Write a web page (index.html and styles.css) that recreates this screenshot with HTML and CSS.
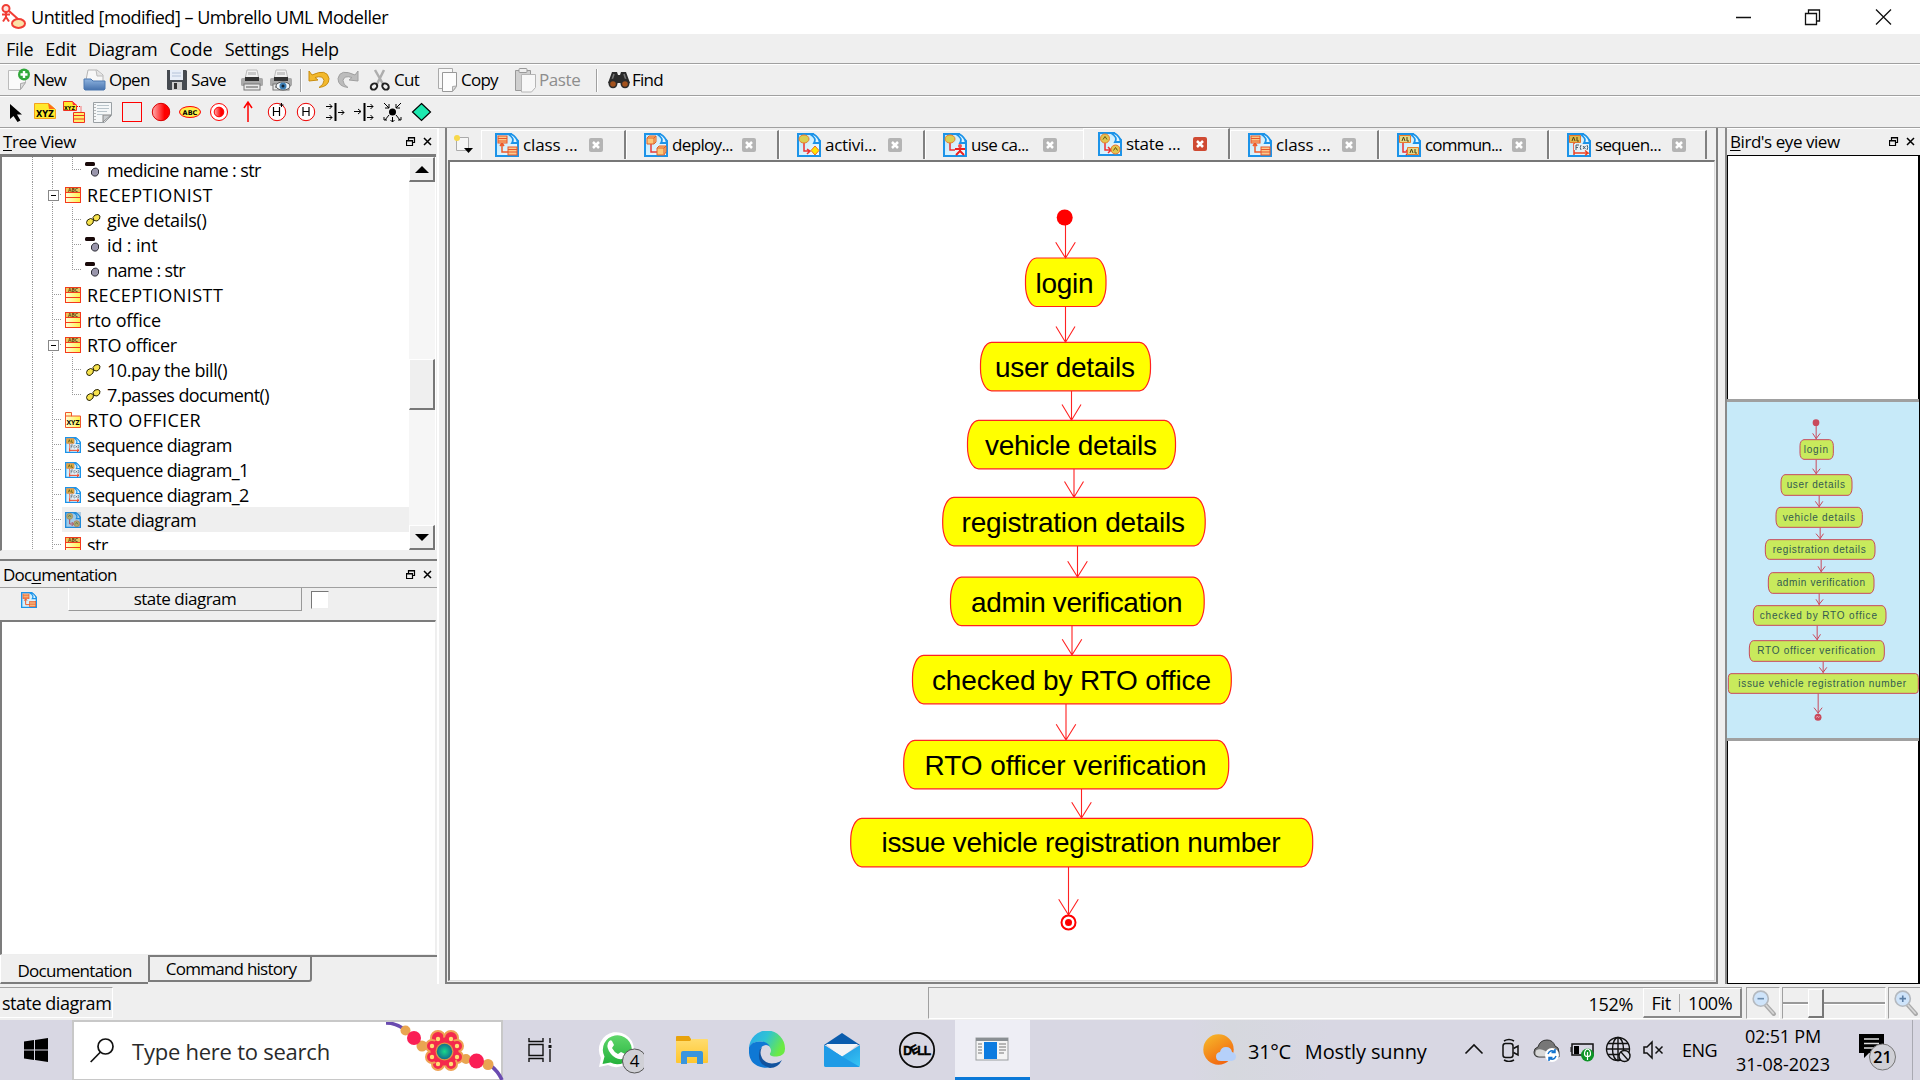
FILE: index.html
```html
<!DOCTYPE html>
<html lang="en">
<head>
<meta charset="utf-8">
<title>Untitled [modified] – Umbrello UML Modeller</title>
<link rel="stylesheet" href="styles.css">
</head>
<body>
<svg class="defs" width="0" height="0">
  <defs>
    <linearGradient id="yel" x1="0" x2="1"><stop offset="0" stop-color="#ffffd8"/><stop offset="1" stop-color="#fff14a"/></linearGradient>
    <linearGradient id="redg" x1="0" x2="1"><stop offset="0" stop-color="#ffb0b0"/><stop offset=".7" stop-color="#f00"/></linearGradient>
    <linearGradient id="page" x1="0" x2="1" y2="1"><stop offset="0" stop-color="#b9e6fb"/><stop offset="1" stop-color="#f4fcff"/></linearGradient>
    <linearGradient id="fold" y2="1" x2="0"><stop offset="0" stop-color="#8fb4e0"/><stop offset="1" stop-color="#4672ad"/></linearGradient>
    <linearGradient id="gold" y2="1" x2="0"><stop offset="0" stop-color="#ffdc6e"/><stop offset="1" stop-color="#ffc62e"/></linearGradient>
    <linearGradient id="wa" y2="1" x2="0"><stop offset="0" stop-color="#5fd66b"/><stop offset="1" stop-color="#25b23c"/></linearGradient>
    <linearGradient id="edge1" x2="1" y2=".4"><stop offset="0" stop-color="#2aa6ee"/><stop offset=".5" stop-color="#2fc3d4"/><stop offset="1" stop-color="#6bea44"/></linearGradient>
    <linearGradient id="sun" x2=".6" y2="1"><stop offset="0" stop-color="#f6bd2c"/><stop offset="1" stop-color="#f2660f"/></linearGradient>
    <linearGradient id="mail" x2="1" y2="1"><stop offset="0" stop-color="#1c87dc"/><stop offset="1" stop-color="#35c6f4"/></linearGradient>
    <radialGradient id="gem"><stop offset="0" stop-color="#19d98b"/><stop offset="1" stop-color="#12708c"/></radialGradient>
    <symbol id="i-class" viewBox="0 0 16 16">
      <rect x=".5" y=".5" width="15" height="15" fill="url(#yel)" stroke="#f43a1c"/>
      <rect x="1" y="1" width="14" height="4" fill="#e8c860"/>
      <path d="M0 5.500H16M0 10.500H16" stroke="#f43a1c"/>
      <text x="8" y="4.800" font-size="5" font-weight="700" text-anchor="middle" fill="#5c3c10">ABC</text>
    </symbol>
    <symbol id="i-pkg" viewBox="0 0 16 16">
      <path d="M.5 .5h6v3.500h9v11.500H.5z" fill="url(#yel)" stroke="#f0582c"/>
      <path d="M1 4h6" stroke="#f0582c"/>
      <text x="8" y="13" font-size="7" font-weight="700" text-anchor="middle">XYZ</text>
    </symbol>
    <symbol id="i-op" viewBox="0 0 16 16">
      <path d="M1.500 10.500l1-2.500 3-1.500 3 1-.5 3.500-3 2.500-2.500-.5zM8 5.500l2-2.500 3-.5 2 1.500-.5 3-2.500 2-3-.5z" fill="#f7e34e" stroke="#2a2400"/>
    </symbol>
    <symbol id="i-attr" viewBox="0 0 16 16">
      <rect x="0" y="0" width="10" height="4" rx="1.500" fill="#180808"/>
      <path d="M6.500 9l2-2.500 3-.5 2 2v3.500l-2 2.500h-3l-2-2z" fill="#9a96ac" stroke="#2c2c34"/>
    </symbol>
    <symbol id="i-doc" viewBox="0 0 24 24">
      <path d="M1 1h15l7 7v15H1z" fill="url(#page)" stroke="#1c93e8" stroke-width="2"/>
      <path d="M13 1h3q6 3 7 9h-6q3-5-4-9z" fill="#e2f5fe" stroke="#1c93e8" stroke-width="1.800"/>
    </symbol>
    <symbol id="i-dclass" viewBox="0 0 24 24"><use href="#i-doc"/><path d="M7 10v9h7M5 13l2-3 2 3" fill="none" stroke="#f05a28" stroke-width="1.500"/><rect x="3" y="3" width="9" height="7" fill="#fbc98a" stroke="#e8562a"/><path d="M3 5.500h9M3 8h9" stroke="#e8562a"/><rect x="13" y="14" width="9" height="8" fill="#fbc98a" stroke="#e8562a"/><path d="M13 16.500h9M13 19h9" stroke="#e8562a"/></symbol>
    <symbol id="i-ddeploy" viewBox="0 0 24 24"><use href="#i-doc"/><path d="M7 10v9h7" fill="none" stroke="#e83a3a" stroke-width="1.500"/><path d="M3 5l2-2h7v6l-2 2H3zM3 5h7v6M10 5l2-2M13 15l2-2h7v6l-2 3h-7zM13 15h7v6M20 15l2-2" fill="#fbc878" stroke="#e0602a"/></symbol>
    <symbol id="i-dact" viewBox="0 0 24 24"><use href="#i-doc"/><path d="M7 9v9h6m-3-2l3 2-3 3" fill="none" stroke="#ee3030" stroke-width="1.500"/><ellipse cx="7" cy="6" rx="5" ry="4" fill="#d9cf52" stroke="#ea7d2a"/><path d="M18 13l4 4.500-4 4.500-4-4.500z" fill="#ffe500" stroke="#ee6a20"/></symbol>
    <symbol id="i-duse" viewBox="0 0 24 24"><use href="#i-doc"/><path d="M7 9v8h5" fill="none" stroke="#ee3030" stroke-width="1.500"/><ellipse cx="7" cy="6" rx="5" ry="4" fill="#d9cf52" stroke="#ea7d2a"/><path d="M17 12v6M12 16h10M17 18l-4 4M17 18l4 4" stroke="#ee2020" stroke-width="2"/><circle cx="17" cy="13" r="2" fill="#f05050"/></symbol>
    <symbol id="i-dstate" viewBox="0 0 24 24"><use href="#i-doc"/><path d="M7 9v9h6m-3-3l3 3-3 3" fill="none" stroke="#ee3030" stroke-width="1.500"/><circle cx="7" cy="6.500" r="4.500" fill="#e0c650" stroke="#ea7d2a"/><circle cx="17.500" cy="17.500" r="4.500" fill="#e0c650" stroke="#ea6d2a"/><path d="M5 7.500l2-3 2 3M15.500 18.500l2-3 2 3" fill="none" stroke="#635414"/></symbol>
    <symbol id="i-dcomm" viewBox="0 0 24 24"><use href="#i-doc"/><path d="M6 10v9h6m-3-2l3 2-3 3" fill="none" stroke="#ee3030" stroke-width="1.500"/><path d="M2.500 2.500h11v7h-11zM10.500 14.500h11v7h-11z" fill="#e4d888" stroke="#ea7d2a"/><path d="M5 8l1.500-4L8 8M10 4v4h2M13 20l1.500-4 1.500 4M18 16v4h2" fill="none" stroke="#4b4310"/></symbol>
    <symbol id="i-dseq" viewBox="0 0 24 24"><use href="#i-doc"/><path d="M7 10v12M7 20h14l-3-2.500m3 2.500l-3 2.500" fill="none" stroke="#ee4020" stroke-width="1.500"/><path d="M2.500 2.500h11v7h-11z" fill="#e0b84a" stroke="#e2762c"/><path d="M5 8l1.500-4L8 8M10 4v4h2" fill="none" stroke="#4b4310"/><rect x="7" y="11" width="14" height="6" fill="#e8eef2"/><path d="M9 17v-5h3M9 14.500h2M14 12q-1.500 2.500 0 5M16 13l2.500 3M18.500 13L16 16M20 12q1.500 2.500 0 5" fill="none" stroke="#4a6070"/></symbol>
    <symbol id="i-close" viewBox="0 0 14 14"><rect width="14" height="14" rx="2"/><path d="M4 4l6 6M10 4l-6 6" stroke="#fff" stroke-width="2.500"/></symbol>
    <symbol id="i-float" viewBox="0 0 10 10"><path d="M2.500 3.500V.5h6v5h-2M2 1h7" fill="none" stroke="#000" stroke-width="1.200"/><path d="M.5 3.500h6v5h-6zM0 4h7" fill="none" stroke="#000" stroke-width="1.200"/></symbol>
    <symbol id="i-x" viewBox="0 0 10 10"><path d="M1 1l7 7M8 1l-7 7" stroke="#000" stroke-width="1.500"/></symbol>
    <symbol id="i-printer" viewBox="0 0 22 22"><path d="M4 10L6 1h10l2 9" fill="#f1f1f1" stroke="#bbb"/><rect x="7" y="3" width="8" height="3" fill="#c9c9c9"/><rect y="9" width="22" height="8" rx="1.500" fill="#a9a9a9"/><rect x="4" y="8" width="14" height="4" fill="#333"/><rect x="3" y="15" width="16" height="6" fill="#e9e9e9" stroke="#777"/><path d="M5 18h12" stroke="#555"/></symbol>
    <symbol id="i-glass" viewBox="0 0 24 24"><path d="M13 13l8 9" stroke="#aaa" stroke-width="4" stroke-linecap="round"/><path d="M13 13l8 9" stroke="#d8d8d8" stroke-width="1.500"/><circle cx="9" cy="8" r="7" fill="#cfe4fa" stroke="#b4b9bf" stroke-width="1.500"/></symbol>
  </defs>
</svg>

<div class="desktop">
  <header class="titlebar">
    <svg width="26" height="30" viewBox="0 0 26 30"><g fill="none" stroke="#f13e35" stroke-width="2"><circle cx="6" cy="6.500" r="3.500" fill="#ffe3dc"/><path d="M6 10v6M2 12.500h8M6 15l-3 4.500M6 15l3 4.500M9 9l9 8"/><ellipse cx="18.500" cy="21.500" rx="6.500" ry="4.500" fill="#fbe2a8"/></g></svg>
    <span class="title">Untitled [modified] – Umbrello UML Modeller</span>
    <svg class="winctl" width="176" height="34" viewBox="0 0 176 34" fill="none" stroke="#111" stroke-width="1.300"><path d="M7 17.500h15M147 9.500l15 15M162 9.500l-15 15"/><path d="M76.500 13.500h11v11h-11zM79.500 13.500v-3.500h11v11h-3"/></svg>
  </header>

  <nav class="menubar"><span>File</span><span>Edit</span><span>Diagram</span><span class="wide">Code</span><span>Settings</span><span>Help</span></nav>

  <div class="toolbar main-tools">
    <button class="tool b-new"><svg width="24" height="24" viewBox="0 0 24 24"><path d="M1.500 2.500h17v12l-5 7h-12z" fill="#fafafa" stroke="#bbb"/><path d="M18.500 14.500l-5 7v-6z" fill="#ddd" stroke="#aaa"/><circle cx="17" cy="6.500" r="6" fill="#31a83a"/><path d="M17 3v7M13.500 6.500h7" stroke="#fff" stroke-width="2.400"/></svg><span>New</span></button>
    <button class="tool b-open"><svg width="24" height="24" viewBox="0 0 24 24"><path d="M3 12L5 2h9l6 5v7H3z" fill="#f7f7f7" stroke="#b5b5b5"/><path d="M13 2l1 6h6" fill="#e3e3e3" stroke="#bbb"/><path d="M1 11h7l2 2h12v8l-1 1H2l-1-1z" fill="url(#fold)" stroke="#4d78b0"/></svg><span>Open</span></button>
    <button class="tool b-save"><svg width="22" height="22" viewBox="0 0 22 22"><path d="M1 1h19l1 1v19H2l-1-1z" fill="#454a50"/><rect x="4" y="1" width="13" height="10" fill="#e8eef8"/><path d="M6 4h9M6 7h9" stroke="#b4c2d8"/><rect x="6" y="13" width="10" height="8" fill="#ccc"/><rect x="8" y="14" width="3" height="6" fill="#333"/></svg><span>Save</span></button>
    <svg class="b-print" width="22" height="22"><use href="#i-printer"/></svg>
    <svg class="b-prev" width="22" height="22" viewBox="0 0 22 22"><use href="#i-printer"/><ellipse cx="13" cy="17" rx="7" ry="4" fill="#f2f7fb" stroke="#555"/><circle cx="13" cy="17" r="3.500" fill="#3c7fb6"/><circle cx="13" cy="17" r="1.500" fill="#123"/></svg>
    <i class="sep"></i>
    <svg class="b-undo" width="22" height="20" viewBox="0 0 22 20"><path d="M1 1v10l9-1-3-2.500q8-2.500 9 3 0 4-5 7 10-1 10-9Q19-2 4 5z" fill="#f3b92d" stroke="#c98d10"/></svg>
    <svg class="b-redo" width="22" height="20" viewBox="0 0 22 20"><path d="M21 1v10l-9-1 3-2.500q-8-2.500-9 3 0 4 5 7Q1 16.500 1 8.500 3-2 18 5z" fill="#bcbcbc" stroke="#a0a0a0"/></svg>
    <button class="tool b-cut"><svg width="22" height="22" viewBox="0 0 22 22"><path d="M6 1l8 14M15 1L8 15" stroke="#aeaeae" stroke-width="2.500"/><g fill="none" stroke="#222" stroke-width="2"><ellipse cx="5" cy="17.500" rx="3.500" ry="2.800" transform="rotate(-40 5 17.500)"/><ellipse cx="16.500" cy="17.500" rx="3.500" ry="2.800" transform="rotate(40 16.500 17.500)"/></g></svg><span>Cut</span></button>
    <button class="tool b-copy"><svg width="22" height="26" viewBox="0 0 22 26"><path d="M1.500 1.500h14v20h-14z" fill="#f8f8f8" stroke="#aaa"/><path d="M5.500 5.500h14v14l-4 5h-10z" fill="#fdfdfd" stroke="#999"/><path d="M19.500 19l-4 5.500v-5z" fill="#ddd" stroke="#aaa"/></svg><span>Copy</span></button>
    <button class="tool b-paste"><svg width="23" height="26" viewBox="0 0 23 26"><path d="M1.500 3.500h15v20h-15z" fill="#cfcfcf" stroke="#999"/><rect x="5" y="1.500" width="8" height="4" rx="1" fill="#eee" stroke="#999"/><path d="M7.500 7.500h14v13l-4 4.500h-10z" fill="#f7f7f7" stroke="#b5b5b5"/></svg><span>Paste</span></button>
    <i class="sep s2"></i>
    <button class="tool b-find"><svg width="22" height="18" viewBox="0 0 22 18"><path d="M4 1h5l1 3h2l1-3h5l4 11H0z" fill="#2b2b2b"/><path d="M6 3l-2 6M16 3l2 6" stroke="#777" stroke-width="1.500"/><ellipse cx="5" cy="12.500" rx="4.500" ry="4.800" fill="#2b2b2b"/><ellipse cx="17" cy="12.500" rx="4.500" ry="4.800" fill="#2b2b2b"/><circle cx="5" cy="13" r="2.800" fill="#a3521d"/><circle cx="17" cy="13" r="2.800" fill="#a3521d"/></svg><span>Find</span></button>
  </div>

  <div class="toolbar">
    <svg width="440" height="30" viewBox="0 97 440 30" font-family="DejaVu Sans">
      <path d="M10 104v15l3.500-3 4 6 3-1.500-3.500-6h5z" fill="#000"/>
      <path d="M34.500 103.500h14l7 6v9h-21z" fill="#ffe92e" stroke="#f5a11a"/><path d="M48 103l1 6h6z" fill="#ff6b1a"/><text x="45" y="117" font-size="8" font-weight="700" text-anchor="middle" textLength="18" lengthAdjust="spacingAndGlyphs">XYZ</text>
      <path d="M63.500 101.500h9l4 4v5h-13z" fill="#ffe92e" stroke="#f03020"/><path d="M72 101l1 4h4z" fill="#f33"/><text x="69.500" y="109.500" font-size="5.500" font-weight="700" text-anchor="middle" textLength="11" lengthAdjust="spacingAndGlyphs">XYZ</text><path d="M77 106.500h4v6" fill="none" stroke="#f00" stroke-dasharray="1 1"/><path d="M73.500 112.500h11v10h-11z" fill="#ffef6a" stroke="#f03020"/><path d="M74 115.500h10M74 119h10" stroke="#f03020"/>
      <path d="M93.500 102.500h18v13l-7 7h-11z" fill="#f5f7f8" stroke="#9aa0a4"/><path d="M111 115l-8 0v7z" fill="#c9cdd0" stroke="#888"/><path d="M97 105.500h12M97 108.500h12M97 111.500h10M97 114.500h6" stroke="#b9c4ca"/><path d="M95 104v17" stroke="#777" stroke-dasharray="1 2"/>
      <rect x="122.500" y="102.500" width="19" height="19" fill="#efefef" stroke="#f00"/>
      <circle cx="161" cy="112" r="8.700" fill="url(#redg)" stroke="#d90000"/>
      <ellipse cx="190" cy="112" rx="10.500" ry="5.500" fill="#fff04a" stroke="#f00"/><text x="190" y="114.500" font-size="6.500" font-weight="700" text-anchor="middle">ABC</text>
      <circle cx="219" cy="112" r="8.500" fill="#fff" stroke="#f00"/><circle cx="219" cy="112" r="4.800" fill="url(#redg)" stroke="#f00"/>
      <path d="M248 122v-19M244 108l4-6 4 6" fill="none" stroke="#f00" stroke-width="1.500"/>
      <circle cx="277" cy="112" r="8.700" fill="#fff" stroke="#e00"/><path d="M273.500 107v9M279.500 107v9M273.500 111.500h6" stroke="#000" stroke-width="1.200"/><path d="M279.500 105h4M281.500 103v4" stroke="#000"/>
      <circle cx="306" cy="112" r="8.700" fill="#fff" stroke="#e00"/><path d="M303 107v9M309 107v9M303 111.500h6" stroke="#000" stroke-width="1.200"/>
      <g stroke="#000" fill="none"><path d="M335.500 103v18" stroke-width="2"/><path d="M326 106.500h6M326 117.500h6M338 112.500h6M329.500 104l2.500 2.500-2.500 2.500M329.500 115l2.500 2.500-2.500 2.500M341.500 110l2.500 2.500-2.500 2.500"/><path d="M364.500 103v18" stroke-width="2"/><path d="M354 111.500h7M367 106.500h6M367 117.500h6M358 109l3 2.500-3 2.500M370.500 104l2.500 2.500-2.500 2.500M370.500 115l2.500 2.500-2.500 2.500"/></g>
      <circle cx="392.500" cy="112" r="3.500"/><path d="M384 103l5 5M401 103l-5 5M389 104v4h-4M396 104v4h4M389 115l-4 5M396 115l4 5M392.500 117v5M390.500 120l2 2 2-2M384 117v3h3M401 117v3h-3" stroke="#000" fill="none"/>
      <path d="M421.500 103.500l9 8.500-9 8.500-9-8.500z" fill="#1de9b0" stroke="#000" stroke-width="1.200"/>
    </svg>
  </div>

  <main class="work">
    <section class="left">
      <div class="dockhead"><span class="t8"><u>T</u>ree View</span><svg class="hb" width="10" height="10"><use href="#i-float"/></svg><svg width="10" height="10"><use href="#i-x"/></svg></div>
      <div class="tree">
        <div class="rows">
          <div class="row"><i class="g v"></i><i class="g v"></i><i class="g s end"></i><b class="lab"><svg class="ic"><use href="#i-attr"/></svg><span class="t6">medicine name : str</span></b></div>
          <div class="row"><i class="g v"></i><i class="g s v h exp"></i><b class="lab"><svg class="ic"><use href="#i-class"/></svg><span class="p45">RECEPTIONIST</span></b></div>
          <div class="row"><i class="g v"></i><i class="g v"></i><i class="g s v h"></i><b class="lab"><svg class="ic"><use href="#i-op"/></svg><span class="t3">give details()</span></b></div>
          <div class="row"><i class="g v"></i><i class="g v"></i><i class="g s v h"></i><b class="lab"><svg class="ic"><use href="#i-attr"/></svg><span class="t1">id : int</span></b></div>
          <div class="row"><i class="g v"></i><i class="g v"></i><i class="g s end"></i><b class="lab"><svg class="ic"><use href="#i-attr"/></svg><span class="t6">name : str</span></b></div>
          <div class="row"><i class="g v"></i><i class="g s v h"></i><b class="lab"><svg class="ic"><use href="#i-class"/></svg><span class="p45">RECEPTIONISTT</span></b></div>
          <div class="row"><i class="g v"></i><i class="g s v h"></i><b class="lab"><svg class="ic"><use href="#i-class"/></svg><span class="t1">rto office</span></b></div>
          <div class="row"><i class="g v"></i><i class="g s v h exp"></i><b class="lab"><svg class="ic"><use href="#i-class"/></svg><span class="t3">RTO officer</span></b></div>
          <div class="row"><i class="g v"></i><i class="g v"></i><i class="g s v h"></i><b class="lab"><svg class="ic"><use href="#i-op"/></svg><span class="t4">10.pay the bill()</span></b></div>
          <div class="row"><i class="g v"></i><i class="g v"></i><i class="g s end"></i><b class="lab"><svg class="ic"><use href="#i-op"/></svg><span class="t55">7.passes document()</span></b></div>
          <div class="row"><i class="g v"></i><i class="g s v h"></i><b class="lab"><svg class="ic"><use href="#i-pkg"/></svg><span class="p4">RTO OFFICER</span></b></div>
          <div class="row"><i class="g v"></i><i class="g s v h"></i><b class="lab"><svg class="ic"><use href="#i-dseq"/></svg><span class="t6">sequence diagram</span></b></div>
          <div class="row"><i class="g v"></i><i class="g s v h"></i><b class="lab"><svg class="ic"><use href="#i-dseq"/></svg><span class="t6">sequence diagram_1</span></b></div>
          <div class="row"><i class="g v"></i><i class="g s v h"></i><b class="lab"><svg class="ic"><use href="#i-dseq"/></svg><span class="t6">sequence diagram_2</span></b></div>
          <div class="row"><i class="g v"></i><i class="g s v h"></i><b class="lab sel"><svg class="ic"><use href="#i-dstate"/><rect width="16" height="16" fill="#2878b8" opacity=".3"/></svg><span class="t5">state diagram</span></b></div>
          <div class="row"><i class="g v"></i><i class="g s v h"></i><b class="lab"><svg class="ic"><use href="#i-class"/></svg><span class="t5">str</span></b></div>
        </div>
        <div class="scroll"><div class="sb"><i class="up"></i></div><div class="space a"></div><div class="sb thumb"></div><div class="space"></div><div class="sb"><i class="down"></i></div></div>
      </div>
      <div class="dockhead doc"><span class="t13">Doc<u>u</u>mentation</span><svg class="hb" width="10" height="10"><use href="#i-float"/></svg><svg width="10" height="10"><use href="#i-x"/></svg></div>
      <div class="docbar"><svg width="16" height="16"><use href="#i-dclass"/></svg><div class="docname t9">state diagram</div><i class="check"></i></div>
      <div class="doctext"></div>
      <div class="doctabs"><span class="dt on">Documentation</span><span class="dt off">Command history</span></div>
    </section>

    <section class="center">
      <div class="tabs">
        <svg class="newtab" width="21" height="21" viewBox="0 0 21 21"><path d="M3.500 3.500h12v13h-12z" fill="#f6f6f6" stroke="#aaa"/><circle cx="4" cy="4" r="3" fill="#f7d84a"/><path d="M11 14h9l-4.500 5z"/></svg>
        <div class="tab w1"><svg class="ti"><use href="#i-dclass"/></svg><span class="t7">class ...</span><svg class="tc"><use href="#i-close"/></svg></div>
        <div class="tab w2"><svg class="ti"><use href="#i-ddeploy"/></svg><span>deploy...</span><svg class="tc"><use href="#i-close"/></svg></div>
        <div class="tab w3"><svg class="ti"><use href="#i-dact"/></svg><span class="t5">activi...</span><svg class="tc"><use href="#i-close"/></svg></div>
        <div class="tab w4"><svg class="ti"><use href="#i-duse"/></svg><span>use ca...</span><svg class="tc"><use href="#i-close"/></svg></div>
        <div class="tab w5 on"><svg class="ti"><use href="#i-dstate"/></svg><span class="t5">state ...</span><svg class="tc"><use href="#i-close"/></svg></div>
        <div class="tab w6"><svg class="ti"><use href="#i-dclass"/></svg><span class="t7">class ...</span><svg class="tc"><use href="#i-close"/></svg></div>
        <div class="tab w7"><svg class="ti"><use href="#i-dcomm"/></svg><span class="t10">commun...</span><svg class="tc"><use href="#i-close"/></svg></div>
        <div class="tab w8"><svg class="ti"><use href="#i-dseq"/></svg><span>sequen...</span><svg class="tc"><use href="#i-close"/></svg></div>
      </div>
      <div class="canvas">
        <svg class="diagram" width="1264" height="818" viewBox="450 162 1264 818">
          <g fill="#ff0" stroke="#f22" stroke-width="1.200">
            <rect x="1025.500" y="258" width="80.500" height="48.500" rx="11" ry="22"/>
            <rect x="980.500" y="342.300" width="170" height="48.500" rx="11" ry="22"/>
            <rect x="967.500" y="420.300" width="208" height="48.500" rx="11" ry="22"/>
            <rect x="942.700" y="497.300" width="262.500" height="48.500" rx="11" ry="22"/>
            <rect x="950.500" y="577.200" width="253.700" height="48.500" rx="11" ry="22"/>
            <rect x="912.500" y="655.300" width="318.800" height="48.500" rx="11" ry="22"/>
            <rect x="903.700" y="740.300" width="325" height="48.500" rx="11" ry="22"/>
            <rect x="850.700" y="818.300" width="462" height="48.500" rx="11" ry="22"/>
          </g>
          <g fill="none" stroke="#f22" stroke-width="1.100">
            <path d="M1065.500 225v33M1055.700 242.300l9.800 15.700 9.800-15.700M1065.500 307v35M1056 326.500l9.500 15.700 9.500-15.700M1071.500 391v29M1062 404.500l9.500 15.700 9.500-15.700M1074 469v28M1064.500 481.500l9.500 15.700 9.500-15.700M1077.500 546v31M1067.700 561.300l9.800 15.700 9.800-15.700M1072 626v29M1062.200 639.300l9.800 15.700 9.800-15.700M1066 704v36M1056.200 724.300l9.800 15.700 9.800-15.700M1081.500 789v29M1071.700 802.300l9.800 15.700 9.800-15.700M1068.500 867v48M1058.700 899.300l9.800 15.700 9.800-15.700"/>
          </g>
          <circle cx="1064.700" cy="217.500" r="8" fill="red"/>
          <circle cx="1068.500" cy="922.500" r="7" fill="#fff" stroke="red" stroke-width="2"/><circle cx="1068.500" cy="922.500" r="3.500" fill="red"/>
          <g class="big">
            <text x="1035.500" y="292.500" textLength="58">login</text>
            <text x="995" y="376.800" textLength="140">user details</text>
            <text x="985" y="454.800" textLength="172">vehicle details</text>
            <text x="961.500" y="531.800" textLength="223.500">registration details</text>
            <text x="971" y="611.700" textLength="211.500">admin verification</text>
            <text x="932" y="689.800" textLength="279">checked by RTO office</text>
            <text x="924.500" y="774.800" textLength="282">RTO officer verification</text>
            <text x="881.500" y="852" textLength="399">issue vehicle registration number</text>
          </g>
        </svg>
      </div>
    </section>

    <section class="right">
      <div class="dockhead"><span class="t8"><u>B</u>ird's eye view</span><svg class="hb" width="10" height="10"><use href="#i-float"/></svg><svg width="10" height="10"><use href="#i-x"/></svg></div>
      <div class="bird">
        <svg class="mini" width="192" height="336" viewBox="82 36 576 1008">
          <g fill="#c8ea5c" stroke="#c94a5c" stroke-width="3">
            <rect x="301" y="149" width="100" height="59" rx="12" ry="18"/><rect x="244" y="254" width="213" height="62" rx="12" ry="22"/><rect x="229" y="352" width="259" height="60" rx="12" ry="22"/><rect x="197" y="449" width="329" height="59" rx="12" ry="22"/><rect x="206" y="548" width="317" height="62" rx="12" ry="22"/><rect x="161" y="647" width="398" height="59" rx="12" ry="22"/><rect x="149" y="752" width="405" height="62" rx="12" ry="22"/><rect x="86" y="851" width="570" height="59" rx="8" ry="12"/>
          </g>
          <path fill="none" stroke="#c94a5c" stroke-width="3" d="M349.500 100v48M339 130l10.500 16 12-16M349.500 209v44M339 236l10.500 15 12-15M358.500 317v35M347 334l11.500 16 11-16M361.500 413v35M349 431l12.500 15 10-15M364.500 509v38M355 529l9.500 16 12-16M358.500 611v35M349 628l9.500 15 12-15M352.500 707v44M340 733l12.500 16 10-16M370.500 815v35M359 832l11.500 15 11-15M355.500 911v60M343 953l12.500 16 12-16"/>
          <circle cx="349" cy="98" r="10" fill="#c94a5c"/><circle cx="355" cy="982" r="10.500" fill="#c94a5c"/><path d="M350 983l3-5 4 5 3-4" stroke="#f0c8d8" stroke-width="2" fill="none"/>
          <g class="small">
            <text x="312" y="189" textLength="73">login</text><text x="261" y="294" textLength="175">user details</text><text x="249" y="393" textLength="217">vehicle details</text><text x="219" y="489" textLength="279">registration details</text><text x="231" y="588" textLength="265">admin verification</text><text x="180" y="687" textLength="352">checked by RTO office</text><text x="173" y="792" textLength="353">RTO officer verification</text><text x="116" y="891" textLength="503">issue vehicle registration number</text>
          </g>
        </svg>
      </div>
    </section>
  </main>

  <footer class="status">
    <div class="smsg">state diagram</div>
    <div class="sinfo"><span class="zoomval">152%</span><div class="fitbox"><span>Fit</span><i></i><span>100%</span></div></div>
    <div class="sbox z1"><svg width="26" height="26" viewBox="0 0 24 24"><use href="#i-glass"/><path d="M6 8h6" stroke="#6c8cae" stroke-width="1.500"/></svg></div>
    <div class="sbox z2"><i class="groove l"></i><i class="knob"></i><i class="groove"></i></div>
    <div class="sbox z3"><svg width="26" height="26" viewBox="0 0 24 24"><use href="#i-glass"/><path d="M6 8h6M9 5v6" stroke="#5c7fa6" stroke-width="1.500"/></svg></div>
  </footer>

  <div class="taskbar">
    <div class="start"><svg width="24" height="24" viewBox="0 0 24 24"><path d="M0 3.500L10 2v9.500H0zM11 1.900L24 0v11.500H11zM0 12.500h10V22L0 20.500zM11 12.500h13V24l-13-1.900z"/></svg></div>
    <div class="search">
      <svg width="24" height="25" viewBox="0 0 24 25" fill="none" stroke="#111" stroke-width="1.700"><circle cx="15.500" cy="8.500" r="7.500"/><path d="M10.500 14L.7 24"/></svg>
      <span>Type here to search</span>
      <svg class="rakhi" width="118" height="58" viewBox="386 1021 118 58">
        <path d="M386 1022q10 0 18 6M490 1064q8 6 12 15" fill="none" stroke="#6a4bb0" stroke-width="3.500"/>
        <g fill="#e9a551"><circle cx="405.500" cy="1029.500" r="5"/><circle cx="422" cy="1045" r="5.500"/><circle cx="466" cy="1058" r="5"/><circle cx="488" cy="1063.500" r="5.500"/></g>
        <circle cx="414" cy="1037" r="7" fill="#fa1f55"/><circle cx="476.500" cy="1060" r="7.500" fill="#fa1f55"/>
        <g fill="#f4294c" stroke="#efa254" stroke-width="2"><circle cx="438" cy="1037" r="7"/><circle cx="451" cy="1037" r="7"/><circle cx="457" cy="1045" r="6"/><circle cx="457" cy="1056" r="6"/><circle cx="451" cy="1063" r="6"/><circle cx="438" cy="1063" r="6"/><circle cx="432" cy="1056" r="6"/><circle cx="432" cy="1045" r="6"/></g>
        <circle cx="444.500" cy="1050.500" r="14" fill="#f4294c"/><g fill="#ffdd74"><circle cx="438" cy="1038" r="2.200"/><circle cx="451" cy="1038" r="2.200"/><circle cx="457" cy="1045" r="2.200"/><circle cx="457" cy="1056" r="2.200"/><circle cx="451" cy="1063" r="2.200"/><circle cx="438" cy="1063" r="2.200"/><circle cx="432" cy="1056" r="2.200"/><circle cx="432" cy="1045" r="2.200"/></g>
        <circle cx="444.500" cy="1050.500" r="9" fill="#d99a45"/><circle cx="444.500" cy="1050.500" r="7.700" fill="url(#gem)"/>
      </svg>
    </div>
    <div class="app tv"><svg width="24" height="24" viewBox="0 0 24 24" fill="none" stroke="#111" stroke-width="1.400"><path d="M1 0v3.500h14V0M1 24v-3.500h14V24M1 6.500h14v11H1zM22 0v5M22 11v13"/><path d="M20.500 7h3v3h-3z" fill="#111" stroke="none"/></svg></div>
    <div class="app"><svg width="54" height="48" viewBox="591 1026 54 48"><path d="M600 1067l2-9a17.500 17.500 0 1 1 7 7z" fill="#fff"/><path d="M603.500 1064l2-7.500a14.500 14.500 0 1 1 6 6z" fill="url(#wa)"/><path d="M609 1043q2-4 4-2l2 4-2 3q2 4 6 6l3-2 4 2q1 3-3 5-6 1-11-5-5-6-3-11z" fill="#fff"/><circle cx="635.500" cy="1061" r="12" fill="#d0d0d6" stroke="#555"/><text x="635.500" y="1067" font-size="17" text-anchor="middle">4</text></svg></div>
    <div class="app"><svg width="34" height="30" viewBox="0 0 34 30"><path d="M1 2q0-1 1-1h12l2 3v4H1z" fill="#e8a20c"/><path d="M1 6h14l2-2h15q1 0 1 1v22q0 1-1 1H2q-1 0-1-1z" fill="url(#gold)"/><path d="M6 29V18q0-2 2-2h18q2 0 2 2v11h-6v-7H12v7z" fill="#3a95dd"/></svg></div>
    <div class="app"><svg width="38" height="38" viewBox="0 0 38 38"><path d="M1 17a18 18 0 0 1 36 1q0 7-8 7.500-8 0-7-3 2-3 0-6-3-6-10-6-9 0-11 6.500z" fill="url(#edge1)"/><path d="M1 16.500q2-6 11-6 7 0 10 5-4-3-8 0-4 4-1 11 4 9 12 9-6 2-10 1Q2 34 1 22z" fill="#0f78d4"/><path d="M14 16q-3 6 0 11 4 7 14 5 4-1 6-3-4 8-12 8Q10 34 11 23q0-5 3-7z" fill="#12539e"/></svg></div>
    <div class="app"><svg width="38" height="36" viewBox="0 0 38 36"><path d="M1 13L19 1l18 12z" fill="#0b5cad"/><path d="M3 12h32L19 26z" fill="#f4f4f6"/><path d="M1 13l18 11.500L37 13v20q0 2-2 2H3q-2 0-2-2z" fill="url(#mail)"/><path d="M19 24.500L37 35H3q-2 0-2-2V13z" fill="#1f9be6"/></svg></div>
    <div class="app"><svg width="38" height="38" viewBox="0 0 38 38"><circle cx="19" cy="19" r="17.200" fill="none" stroke="#0a0a0a" stroke-width="1.800"/><g font-family="Liberation Sans" font-weight="700" font-size="12" text-anchor="middle" stroke="#000" stroke-width=".4"><text x="9.500" y="23.500">D</text><text x="17" y="22.500" transform="rotate(-28 17 19)">E</text><text x="23" y="23.500">L</text><text x="29.500" y="23.500">L</text></g></svg></div>
    <div class="app active"><svg width="34" height="24" viewBox="0 0 34 24"><rect x="1" y="1" width="32" height="22" fill="#f4f4f4" stroke="#9a9da0"/><rect x="1" y="1" width="32" height="3" fill="#8a8f93"/><rect x="9" y="5" width="13" height="17" fill="#0c7be0"/><path d="M3 7h4M3 10h4M3 13h4M3 16h4M24 7h7M24 10h7M24 13h7M24 16h5" stroke="#777"/></svg></div>
    <div class="tray">
      <div class="weather"><svg width="34" height="34" viewBox="0 0 34 34"><circle cx="15.500" cy="16.500" r="15.200" fill="url(#sun)"/><path d="M18 28q-5 0-5-4.500 0-4 4-4.500 1-5 6-5 5 0 6 5 4 1 4 4.500T29 28z" fill="#b5d0fa"/></svg><span class="deg">31°C</span><span class="cond">Mostly sunny</span></div>
      <svg width="22" height="24" viewBox="0 0 22 24" fill="none" stroke="#111" stroke-width="1.600"><path d="M2.500 15.500L11 7l8.500 8.500"/></svg>
      <svg width="22" height="24" viewBox="0 0 22 24" fill="none" stroke="#111" stroke-width="1.500"><rect x="3" y="5.500" width="10" height="14" rx="2.500"/><path d="M13.500 10.500l4.500-2.500v9l-4.500-2.500M4 3q5-3 10 0M4 22q5 3 10 0"/></svg>
      <svg width="28" height="24" viewBox="0 0 28 24"><path d="M6 19q-5 0-5-5 0-4 4-5 2-7 9-7 6 0 8 6 4 1 4 6v5z" fill="#777" stroke="#333"/><path d="M6 18.500q-5-1-3-6 6-4 16 6z" fill="#d8d8d8"/><circle cx="19" cy="17" r="7" fill="#fff"/><path d="M15 16q2-5 7-2M23 18q-2 5-7 2M22 11v3.500h-3.500M16 23v-3.500h3.500" fill="none" stroke="#1273cf" stroke-width="1.500"/></svg>
      <svg width="28" height="24" viewBox="0 0 28 24"><rect x="2" y="6" width="21" height="11" fill="none" stroke="#111" stroke-width="1.500"/><rect x="4" y="8" width="5" height="8"/><path d="M1 9v5" stroke="#111"/><circle cx="17.500" cy="17" r="6.500" fill="#0d9426"/><path d="M17.500 22v-8M14.500 16q0-4 3-5 3 1 3 5 0 2.500-3 2.500t-3-2.500" fill="none" stroke="#fff" stroke-width="1.200"/></svg>
      <svg width="28" height="28" viewBox="0 0 28 28" fill="none" stroke="#111" stroke-width="1.400"><circle cx="13" cy="13" r="11.500"/><ellipse cx="13" cy="13" rx="5.500" ry="11.500"/><path d="M1.500 13h23M3 7.500h20M3 18.500h12M13 1.500v23"/><circle cx="19.500" cy="20" r="5.500" fill="#d8d8e4"/><path d="M16 16l7 8"/></svg>
      <svg width="24" height="24" viewBox="0 0 24 24" fill="none" stroke="#111" stroke-width="1.500"><path d="M2 9v6h3l5 5V4L5 9zM13.500 8.500l7 7M20.500 8.500l-7 7"/></svg>
      <span class="lang">ENG</span>
      <div class="clock"><span class="tm">02:51 PM</span><span>31-08-2023</span></div>
      <i></i>
      <svg class="note" width="42" height="48" viewBox="1855 1030 42 48"><path d="M1858 1038h25v19h-15l-5 5v-5h-5z"/><path d="M1863 1043h15M1863 1047.500h15M1863 1052h10" stroke="#ddd" stroke-width="1.500"/><circle cx="1881.500" cy="1061" r="13" fill="#d0d0d6" stroke="#777"/><text x="1881.500" y="1067" font-size="16" font-weight="600" text-anchor="middle">21</text></svg>
      <i class="peek"></i>
    </div>
  </div>
</div>
</body>
</html>
```
FILE: styles.css
```css
* { box-sizing: border-box; }
body {
  margin: 0;
  background: #efefef;
  color: #000;
  font: 18px/24px "Open Sans", "Noto Sans", sans-serif;
  overflow: hidden;
}
.defs { position: absolute; }
svg { display: block; flex: none; }
span { white-space: nowrap; }
u { text-decoration-thickness: 1px; text-underline-offset: 2px; }
button { border: 0; background: none; padding: 0; font: inherit; color: inherit; }

.desktop {
  width: 1920px;
  height: 1080px;
  display: grid;
  grid-template-rows: 34px 30px 32px 32px 856px 36px 60px;
}

/* letter spacing steps used by the labels */
.t1 { letter-spacing: -.15px; }
.t3 { letter-spacing: -.32px; }
.t4 { letter-spacing: -.44px; }
.t5 { letter-spacing: -.5px; }
.t55 { letter-spacing: -.57px; }
.t6 { letter-spacing: -.62px; }
.t7 { letter-spacing: -.35px; }
.t8 { letter-spacing: -.45px; }
.t9 { letter-spacing: -.5px; }
.t10 { letter-spacing: -.8px; }
.t13 { letter-spacing: -.75px; }
.p4 { letter-spacing: .39px; }
.p45 { letter-spacing: .45px; }

/* window chrome */
.titlebar { background: #fff; display: flex; align-items: center; }
.title { margin-left: 5px; letter-spacing: -.48px; }
.winctl { margin-left: auto; margin-right: 16px; }

.menubar {
  display: flex;
  align-items: center;
  padding-left: 6px;
  padding-top: 1px;
  border-bottom: 1px solid #a0a0a0;
}
.menubar span { letter-spacing: -.3px; margin-right: 12px; }
.menubar .wide { letter-spacing: 0; margin-right: 12px; }

.toolbar {
  display: flex;
  align-items: center;
  border-top: 1px solid #fff;
  border-bottom: 1px solid #a0a0a0;
}
.main-tools { font-size: 17px; padding-left: 7px; }
.tool { display: flex; align-items: center; height: 30px; }
.tool span { letter-spacing: -.75px; margin-left: 2px; }
.b-new { width: 76px; }
.b-open { width: 83px; }
.b-save { width: 75px; }
.b-save span { margin-left: 3px; letter-spacing: -.4px; }
.b-prev { margin-left: 7px; }
.sep { width: 2px; height: 23px; margin: 0 6px 0 8px; background: #a0a0a0; border-right: 1px solid #fff; }
.b-redo { margin-left: 7px; }
.b-cut { margin-left: 10px; width: 68px; }
.b-cut span { margin-left: 3px; }
.b-copy { width: 77px; }
.b-paste { width: 80px; color: #8d8d8d; }
.b-paste span { letter-spacing: -.4px; }
.s2 { margin: 0 10px 0 2px; }

/* work area */
.work { display: grid; grid-template-columns: 439px 1286px 195px; height: 856px; }
.left { display: flex; flex-direction: column; border-right: 2px solid #fff; }
.dockhead { display: flex; align-items: center; height: 26px; padding: 0 4px 0 3px; font-size: 17px; border-top: 1px solid #fff; }
.dockhead .hb { margin-left: auto; margin-right: 7px; }

.tree {
  display: flex;
  height: 397px;
  margin-right: 1px;
  background: #fff;
  border: solid #7c7c7c;
  border-width: 3px 0 1px 2px;
  border-bottom-color: #efefef;
}
.rows { width: 407px; height: 393px; flex: none; overflow: hidden; padding-left: 30px; }
.row { display: flex; height: 25px; }
.g { width: 20px; position: relative; }
.g.s { width: 10px; }
.g.v { background: repeating-linear-gradient(#999 0 1px, transparent 1px 2px) 0 0 / 1px 100% no-repeat; }
.g.h::after, .end::after { content: ""; display: block; margin-top: 12px; height: 1px; background: repeating-linear-gradient(90deg, #999 0 1px, transparent 1px 2px); }
.end { background: repeating-linear-gradient(#999 0 1px, transparent 1px 2px) 0 0 / 1px 13px no-repeat; }
.exp::before {
  content: "";
  position: absolute;
  left: -4px;
  top: 8px;
  width: 9px;
  height: 9px;
  border: 1px solid #888;
  background: linear-gradient(#000, #000) center / 5px 1px no-repeat, #fff;
}
.lab { flex: 1; display: flex; align-items: center; gap: 6px; padding-left: 3px; font-weight: 400; }
.lab.sel { background: #efefef; }
.ic { width: 16px; height: 16px; }

.scroll { width: 26px; flex: none; display: flex; flex-direction: column; background: #f6f6f6; }
.sb { height: 25px; display: grid; place-items: center; background: #efefef; border: 1px solid #fff; border-right: 2px solid #777; border-bottom: 2px solid #777; }
.thumb { height: 51px; }
.space { flex: 1; }
.space.a { flex: none; height: 177px; }
.up, .down { border: 7px solid transparent; }
.up { border-top: 0; border-bottom: 7px solid #000; }
.down { border-bottom: 0; border-top: 7px solid #000; }

.doc { margin-top: 8px; height: 29px; border-top: 2px solid #7c7c7c; border-bottom: 1px solid #a0a0a0; padding-top: 1px; }
.docbar { display: flex; align-items: center; height: 32px; padding: 0 0 9px 21px; }
.docname { margin-left: 31px; width: 234px; height: 23px; text-align: center; font-size: 17px; line-height: 22px; border-right: 1px solid #999; border-bottom: 1px solid #999; border-left: 1px solid #fff; }
.check { width: 18px; height: 18px; margin-left: 9px; background: #fff; border: 1px solid #777; border-right-color: #eee; border-bottom-color: #eee; }
.doctext { height: 335px; margin-right: 1px; background: #fff; border: 2px solid #7c7c7c; border-right: 1px solid #eee; border-bottom: 1px solid #eee; }
.doctabs { display: flex; align-items: flex-start; height: 29px; font-size: 17px; }
.dt { text-align: center; letter-spacing: -.7px; }
.dt.on { width: 148px; height: 29px; line-height: 32px; border-bottom: 2px solid #7c7c7c; border-left: 1px solid #fff; }
.dt.off { width: 164px; height: 27px; line-height: 24px; padding-left: 2px; letter-spacing: -.75px; border: 2px solid #7c7c7c; border-radius: 0 0 3px 0; }
.doctabs::after { content: ""; flex: 1; border-top: 2px solid #7c7c7c; }

.center { margin: 0 7px 0 6px; border: solid #808080; border-width: 0 2px 2px; display: flex; flex-direction: column; }
.tabs { display: flex; height: 32px; padding-top: 2px; font-size: 17px; }
.newtab { margin: 4px 7px 0 6px; }
.tab { display: flex; align-items: center; gap: 4px; height: 29px; padding: 0 21px 1px 17px; border-top: 1px solid #fff; border-right: 2px solid #808080; border-left: 1px solid #fff; }
.tab span { letter-spacing: -.65px; padding-top: 1px; }
.tab .t5 { letter-spacing: -.3px; }
.tab .t7 { letter-spacing: -.15px; }
.tab .t10 { letter-spacing: -.8px; }
.ti { width: 24px; height: 24px; }
.tc { width: 14px; height: 14px; margin-left: auto; fill: #b4b4b4; }
.w1 { width: 145px; padding-left: 13px; }
.w2 { width: 153px; }
.w3 { width: 146px; }
.w4 { width: 158px; border-right: 0; padding-right: 26px; }
.w5 { width: 147px; padding-left: 14px; }
.w6 { width: 149px; }
.w7 { width: 170px; }
.w8 { width: 158px; padding-right: 19px; }
.tab.on { margin-top: -2px; height: 31px; }
.tab.on .tc { fill: #cf4a32; }
.canvas { flex: 1; margin: 0 1px 1px 1px; background: #fff; border: 2px solid #777; border-right: 1px solid #ddd; border-bottom: 1px solid #ddd; }
.diagram { width: 1264px; }
.big { font: 28px "Liberation Sans", sans-serif; }
.small { font: 30px "Liberation Sans", sans-serif; fill: #335a50; }

.right { border-left: 2px solid #8a8a8a; display: flex; flex-direction: column; }
.bird { flex: 1; margin-top: 1px; background: #fff; border: 1px solid #000; border-right-width: 2px; padding-top: 243px; }
.mini { width: 192px; height: 342px; margin-left: -1px; background: #c7eaf9; border: solid #a0a0a0; border-width: 3px 0; }

/* status bar */
.status { display: flex; align-items: flex-start; padding-top: 3px; font-size: 17px; }
.smsg { width: 113px; height: 31px; line-height: 31px; padding-left: 2px; font-size: 18px; letter-spacing: -.48px; white-space: nowrap; border: 1px solid #a0a0a0; border-left: 0; border-right-color: #fff; border-bottom-color: #fff; }
.sinfo { margin-left: 815px; width: 814px; height: 32px; display: flex; border: 1px solid #a0a0a0; border-right: 0; border-bottom: 1px solid #fff; line-height: 32px; font-size: 18px; }
.zoomval { margin-left: auto; margin-right: 10px; letter-spacing: -.3px; }
.fitbox { width: 99px; height: 30px; display: flex; justify-content: center; align-items: center; gap: 8px; letter-spacing: -.3px; border: 1px solid #fff; border-right: 2px solid #888; border-bottom: 2px solid #888; }
.fitbox span { padding-top: 1px; }
.fitbox i { width: 1px; height: 18px; background: #aaa; }
.sbox { height: 32px; display: flex; align-items: center; border: 1px solid #a0a0a0; border-right-color: #fff; border-bottom-color: #fff; }
.z1 { width: 34px; margin-left: 4px; padding-left: 4px; }
.z2 { width: 104px; margin-left: 2px; }
.z3 { width: 33px; margin-left: 2px; padding-left: 4px; }
.groove { flex: 1; height: 3px; background: #999; border-bottom: 1px solid #fff; }
.groove.l { flex: 0 0 25px; }
.knob { width: 16px; height: 29px; background: #efefef; border: 1px solid #fff; border-right: 2px solid #777; border-bottom: 2px solid #777; }

/* taskbar */
.taskbar { display: flex; background: linear-gradient(90deg, #d8d7e3 0 1190px, #d6d8de 1230px, #d8d7e3 1330px); }
.start { width: 72px; display: grid; place-items: center; }
.search { width: 431px; height: 60px; display: flex; align-items: center; background: #fff; border: 2px solid #c8c8c8; border-bottom-width: 1px; padding-left: 16px; font-size: 22px; color: #2a2a2a; letter-spacing: -.24px; }
.search span { margin-left: 18px; padding-top: 1px; }
.rakhi { margin-left: auto; margin-right: -3px; }
.app { width: 75px; display: grid; place-items: center; padding-right: 1px; }
.tv { width: 77px; padding-right: 3px; }
.active { background: #eeeef5; border-bottom: 3px solid #0a79d8; padding-right: 2px; }
.tray { margin-left: 173px; display: grid; align-items: center; grid-template-columns: 260px 37px 33px 37px 35px 37px 40px 54px 93px 27px 56px 7px; }
.weather { display: flex; align-items: center; font-size: 20px; }
.weather span { padding-top: 3px; }
.weather .deg { margin: 0 14px 0 11px; letter-spacing: -.3px; }
.weather .cond { letter-spacing: -.12px; }
.lang { letter-spacing: -.5px; }
.clock { display: grid; justify-items: center; line-height: 28px; }
.tm { letter-spacing: -.2px; }
.peek { height: 60px; border-left: 1px solid #a9a9b2; }
```
